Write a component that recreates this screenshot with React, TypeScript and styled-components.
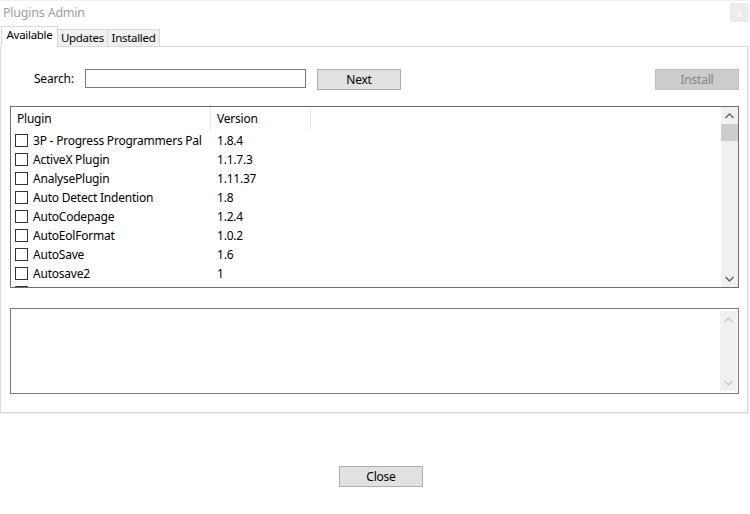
import styled, { createGlobalStyle } from "styled-components"

const GlobalStyle = createGlobalStyle`
  html, body {
    margin: 0;
    padding: 0;
    background: #fff;
  }
  body {
    font-family: "Noto Sans", "Open Sans", sans-serif;
    font-size: 12px;
    letter-spacing: -0.22px;
    color: #000;
  }
`

const plugins: [string, string][] = [
  ["3P - Progress Programmers Pal", "1.8.4"],
  ["ActiveX Plugin", "1.1.7.3"],
  ["AnalysePlugin", "1.11.37"],
  ["Auto Detect Indention", "1.8"],
  ["AutoCodepage", "1.2.4"],
  ["AutoEolFormat", "1.0.2"],
  ["AutoSave", "1.6"],
  ["Autosave2", "1"],
]

const App: React.FC = () => {
  return (
    <Window>
      <GlobalStyle />
      <TitleBar>
        <span className="title">Plugins Admin</span>
        <CloseX>x</CloseX>
      </TitleBar>
      <Tabs>
        <Tab active width={57}>Available</Tab>
        <Tab width={51}>Updates</Tab>
        <Tab width={53}>Installed</Tab>
      </Tabs>
      <Panel>
        <Toolbar>
          <label>Search:</label>
          <SearchInput />
          <Button width={84}>Next</Button>
          <Spacer />
          <Button width={84} disabled>
            Install
          </Button>
        </Toolbar>
        <ListBox>
          <ListBody>
            <HeaderRow>
              <HeaderCell width={200}>Plugin</HeaderCell>
              <HeaderCell width={100}>Version</HeaderCell>
            </HeaderRow>
            {plugins.map(([name, ver]) => (
              <Row key={name}>
                <Check />
                <NameCell>{name}</NameCell>
                <span>{ver}</span>
              </Row>
            ))}
            {/* next row, only its checkbox edge peeks out */}
            <Row>
              <Check />
            </Row>
          </ListBody>
          <ScrollBar>
            <Arrow>
              <svg width="9" height="6" viewBox="0 0 9 6">
                <path d="M0.5 5 L4.5 1 L8.5 5" fill="none" stroke="#606060" strokeWidth="1.4" />
              </svg>
            </Arrow>
            <Thumb />
            <Track />
            <Arrow>
              <svg width="9" height="6" viewBox="0 0 9 6">
                <path d="M0.5 1 L4.5 5 L8.5 1" fill="none" stroke="#606060" strokeWidth="1.4" />
              </svg>
            </Arrow>
          </ScrollBar>
        </ListBox>
        <DescBox>
          <DescText />
          <ScrollBar inset>
            <Arrow>
              <svg width="9" height="6" viewBox="0 0 9 6">
                <path d="M0.5 5 L4.5 1 L8.5 5" fill="none" stroke="#c8c8c8" strokeWidth="1.4" />
              </svg>
            </Arrow>
            <Track />
            <Arrow>
              <svg width="9" height="6" viewBox="0 0 9 6">
                <path d="M0.5 1 L4.5 5 L8.5 1" fill="none" stroke="#c8c8c8" strokeWidth="1.4" />
              </svg>
            </Arrow>
          </ScrollBar>
        </DescBox>
      </Panel>
      <Footer>
        <Button width={84}>Close</Button>
      </Footer>
    </Window>
  )
}

export default App

const Window = styled.div`
  width: 750px;
  height: 514px;
  display: flex;
  flex-direction: column;
  border-top: 1px solid #f0f0f0;
  box-sizing: border-box;
`

const TitleBar = styled.div`
  height: 24px;
  display: flex;
  align-items: flex-start;
  justify-content: space-between;
  .title {
    margin: 3px 0 0 3px;
    color: #a0a0a0;
    font-size: 12.5px;
  }
`

const CloseX = styled.div`
  width: 19px;
  height: 19px;
  margin: 2px 1px 0 0;
  background: #ececec;
  color: #fff;
  font-size: 11px;
  display: flex;
  align-items: center;
  justify-content: center;
`

const Tabs = styled.div`
  display: flex;
  align-items: flex-end;
  height: 22px;
  padding-left: 1px;
  margin-bottom: -1px;
  position: relative;
  z-index: 1;
`

const Tab = styled.div<{ active?: boolean; width: number }>`
  width: ${(p) => p.width}px;
  height: ${(p) => (p.active ? "21px" : "18px")};
  border: 1px solid #d9d9d9;
  border-bottom: ${(p) => (p.active ? "1px solid #fff" : "1px solid #d9d9d9")};
  background: ${(p) => (p.active ? "#fff" : "#f0f0f0")};
  margin-left: ${(p) => (p.active ? "0" : "-1px")};
  display: flex;
  align-items: center;
  justify-content: center;
  font-size: 11.5px;
  letter-spacing: -0.3px;
  line-height: 1;
  padding-bottom: ${(p) => (p.active ? "3px" : "0")};
  box-sizing: border-box;
`

const Panel = styled.div`
  height: 367px;
  margin-right: 2px;
  border: 1px solid #d9d9d9;
  box-shadow: 1px 1px 0 #ececec;
  box-sizing: border-box;
  display: flex;
  flex-direction: column;
  padding: 0 8px 0 9px;
`

const Toolbar = styled.div`
  display: flex;
  align-items: center;
  height: 22px;
  margin-top: 20px;
  label {
    margin-left: 24px;
    width: 51px;
  }
`

const SearchInput = styled.input`
  width: 221px;
  height: 19px;
  box-sizing: border-box;
  border: 1px solid #7a7a7a;
  margin: 0 11px -1px 0;
  padding: 0;
  outline: none;
`

const Spacer = styled.div`
  flex: 1;
`

const Button = styled.button<{ width: number }>`
  width: ${(p) => p.width}px;
  height: 21px;
  box-sizing: border-box;
  border: 1px solid ${(p) => (p.disabled ? "#bfbfbf" : "#adadad")};
  background: ${(p) => (p.disabled ? "#cccccc" : "#e1e1e1")};
  color: ${(p) => (p.disabled ? "#838383" : "#000")};
  font-family: "Noto Sans", "Open Sans", sans-serif;
  font-size: 12px;
  letter-spacing: -0.22px;
  padding: 0;
  margin-top: 2px;
`

const ListBox = styled.div`
  height: 182px;
  margin-top: 17px;
  border: 1px solid #6e6e6e;
  box-sizing: border-box;
  display: flex;
  overflow: hidden;
`

const ListBody = styled.div`
  flex: 1;
  overflow: hidden;
`

const HeaderRow = styled.div`
  display: flex;
  height: 23px;
  margin-bottom: 1px;
`

const HeaderCell = styled.div<{ width: number }>`
  width: ${(p) => p.width}px;
  box-sizing: border-box;
  padding-left: 6px;
  border-right: 1px solid #e5e5e5;
  display: flex;
  align-items: center;
`

const Row = styled.div`
  display: flex;
  align-items: center;
  height: 19px;
  padding-left: 4px;
`

const Check = styled.span`
  width: 13px;
  height: 13px;
  box-sizing: border-box;
  border: 1px solid #333;
  margin-right: 5px;
  flex-shrink: 0;
`

const NameCell = styled.span`
  width: 184px;
  white-space: nowrap;
  overflow: hidden;
`

const ScrollBar = styled.div<{ inset?: boolean }>`
  width: 17px;
  background: #f0f0f0;
  display: flex;
  flex-direction: column;
  margin: ${(p) => (p.inset ? "2px 1px 2px 0" : "0")};
`

const Arrow = styled.div`
  height: 17px;
  display: flex;
  align-items: center;
  justify-content: center;
`

const Thumb = styled.div`
  height: 17px;
  background: #cdcdcd;
`

const Track = styled.div`
  flex: 1;
`

const DescBox = styled.div`
  height: 86px;
  margin-top: 20px;
  border: 1px solid #7a7a7a;
  box-sizing: border-box;
  display: flex;
`

const DescText = styled.div`
  flex: 1;
`

const Footer = styled.div`
  display: flex;
  justify-content: center;
  padding: 51px 0 0 12px;
`
